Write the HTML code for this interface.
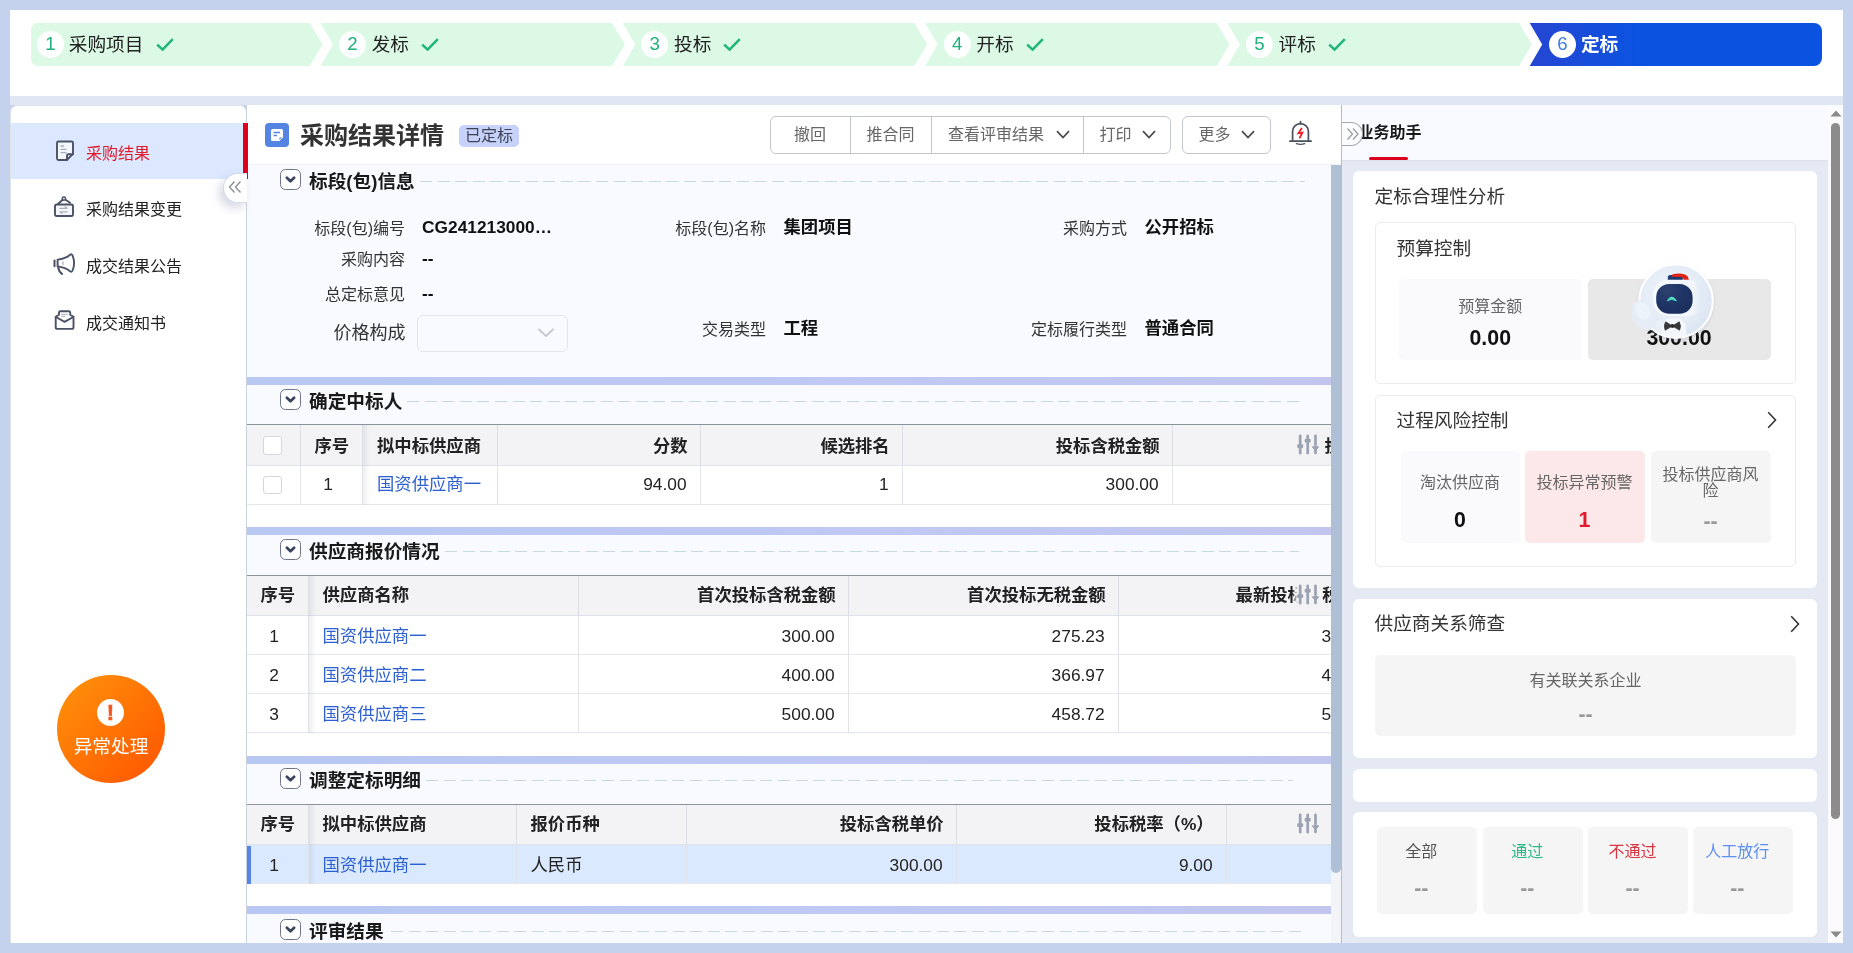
<!DOCTYPE html>
<html lang="zh-CN">
<head>
<meta charset="utf-8">
<title>采购结果详情</title>
<style>
*{box-sizing:border-box;margin:0;padding:0}
html,body{width:1853px;height:953px;overflow:hidden}
body{will-change:transform;background:#c4d2ee;font-family:"Liberation Sans","Noto Sans CJK SC",sans-serif;color:#222;position:relative;font-size:16px}
.abs{position:absolute}
.t{position:absolute;white-space:nowrap;line-height:1}
#top{position:absolute;left:10px;top:10px;width:1833px;height:86px;background:#fff}
#strip{position:absolute;left:10px;top:96px;width:1833px;height:9px;background:#e1e7f2}
.step{position:absolute;top:23px;height:43px;background:#dcf9e6}
.step .num{position:absolute;top:8px;width:27px;height:27px;border-radius:50%;background:#fff;color:#1fb27c;font-size:18.67px;text-align:center;line-height:26px}
.step .lbl{position:absolute;top:0;height:43px;line-height:43.5px;font-size:18.67px;color:#222;white-space:nowrap}
.step svg{position:absolute;top:14.5px}
#side{position:absolute;left:10px;top:105px;width:237px;height:838px;background:#fff;border:1px solid #dfe3ea;border-bottom:none;border-right-color:#cbd2de;border-radius:7px 7px 0 0}
.nav{position:absolute;left:0;width:235px;height:57px}
.nav .tx{position:absolute;left:75px;top:0;line-height:61px;font-size:16px;color:#222;white-space:nowrap}
.nav svg{position:absolute;left:42px}
#mainhead{position:absolute;left:247px;top:105px;width:1094px;height:60px;background:#fff;border-bottom:1px solid #f0f2f7}
#content{position:absolute;left:247px;top:165px;width:1084px;height:778px;background:#f9faff;overflow:hidden}
.band{position:absolute;left:0;width:1084px;height:7.5px;background:linear-gradient(90deg,#b8c8f2,#bfc9f3 55%,#c2c6ee)}
.tog{position:absolute;left:33px;width:21px;height:20.5px;border:1px solid #6e7486;border-radius:5.5px;background:#fff}
.tog svg{position:absolute;left:4px;top:6px}
.dash{position:absolute;height:1px;background:repeating-linear-gradient(90deg,#c9d9e1 0,#c9d9e1 12px,transparent 12px,transparent 17.6px)}
.lab{position:absolute;font-size:16px;color:#333;line-height:1;white-space:nowrap;text-align:right}
.val{position:absolute;font-size:17.33px;font-weight:bold;color:#111;line-height:1;white-space:nowrap}
.th{position:absolute;background:#f3f3f6;border-right:1px solid #dcdfe5;border-bottom:1px solid #dfe2e8;font-size:17.33px;font-weight:bold;color:#222;white-space:nowrap;overflow:hidden}
.td{position:absolute;background:#fff;border-right:1px solid #e1e3e8;border-bottom:1px solid #e6e8ec;font-size:17.33px;color:#222;white-space:nowrap;overflow:hidden}
.tbl{position:absolute;left:0;width:1084px;overflow:hidden;background:#fff}
.lnk{color:#2c60d0}
.cb{position:absolute;left:16px;width:18.5px;height:18.5px;border:1px solid #d3d7df;border-radius:3px;background:#fff}
.sicon{position:absolute}
#right{position:absolute;left:1341px;top:105px;width:487px;height:838px;background:#e5e9f4;overflow:hidden;border-left:1px solid #b3bccb}
.card{position:absolute;left:11px;width:464px;background:#fff;border-radius:6px}
.ibox{position:absolute;left:21.5px;width:421px;border:1px solid #ececf0;border-radius:5px;background:#fff}
.sc{position:absolute;border-radius:5px;text-align:center}
.sc .l{position:absolute;left:0;width:100%;font-size:16px;color:#666;line-height:1;white-space:nowrap}
.sc .v{position:absolute;left:0;width:100%;font-size:21.33px;font-weight:bold;color:#111;line-height:1}
.h2{position:absolute;font-size:18.67px;color:#333;line-height:1;white-space:nowrap}
</style>
</head>
<body>
<div id="top"></div>
<div id="strip"></div>
<div class="step" style="left:31.0px;width:291.6px;clip-path:polygon(0 0,278.7px 0,291.6px 21.5px,278.7px 43px,0 43px);border-radius:7px 0 0 7px;"><span class="num" style="left:6px">1</span><span class="lbl" style="left:37.8px">采购项目</span><svg width="18" height="13" viewBox="0 0 18 13" style="left:124.5px"><path d="M1.200 6.600 L6.600 11.600 L16.800 1.200" fill="none" stroke="#1fb47a" stroke-width="2.500"/></svg></div>
<div class="step" style="left:320.5px;width:304.4px;clip-path:polygon(0 0,291.5px 0,304.4px 21.5px,291.5px 43px,0 43px,12.5px 21.5px);"><span class="num" style="left:18.5px">2</span><span class="lbl" style="left:51.2px">发标</span><svg width="18" height="13" viewBox="0 0 18 13" style="left:100.5px"><path d="M1.200 6.600 L6.600 11.600 L16.800 1.200" fill="none" stroke="#1fb47a" stroke-width="2.500"/></svg></div>
<div class="step" style="left:622.8px;width:304.4px;clip-path:polygon(0 0,291.5px 0,304.4px 21.5px,291.5px 43px,0 43px,12.5px 21.5px);"><span class="num" style="left:18.5px">3</span><span class="lbl" style="left:51.2px">投标</span><svg width="18" height="13" viewBox="0 0 18 13" style="left:100.5px"><path d="M1.200 6.600 L6.600 11.600 L16.800 1.200" fill="none" stroke="#1fb47a" stroke-width="2.500"/></svg></div>
<div class="step" style="left:925.1px;width:304.4px;clip-path:polygon(0 0,291.5px 0,304.4px 21.5px,291.5px 43px,0 43px,12.5px 21.5px);"><span class="num" style="left:18.5px">4</span><span class="lbl" style="left:51.2px">开标</span><svg width="18" height="13" viewBox="0 0 18 13" style="left:100.5px"><path d="M1.200 6.600 L6.600 11.600 L16.800 1.200" fill="none" stroke="#1fb47a" stroke-width="2.500"/></svg></div>
<div class="step" style="left:1227.4px;width:304.4px;clip-path:polygon(0 0,291.5px 0,304.4px 21.5px,291.5px 43px,0 43px,12.5px 21.5px);"><span class="num" style="left:18.5px">5</span><span class="lbl" style="left:51.2px">评标</span><svg width="18" height="13" viewBox="0 0 18 13" style="left:100.5px"><path d="M1.200 6.600 L6.600 11.600 L16.800 1.200" fill="none" stroke="#1fb47a" stroke-width="2.500"/></svg></div>
<div class="step" style="left:1529.7px;width:292.3px;clip-path:polygon(0 0,100% 0,100% 100%,0 100%,12.5px 21.5px);border-radius:0 8px 8px 0;background:linear-gradient(90deg,#2646d2,#0a53e1 38%);"><span class="num" style="left:19.3px;color:#3f7de6">6</span><span class="lbl" style="left:51.2px;color:#fff;font-weight:bold">定标</span></div>
<div id="side">
<div class="nav" style="top:17px;background:#dbe8ff;width:233px;height:55.500px"></div>
<div class="t" style="left:75px;top:39.500px;font-size:16px;color:#e0192d">采购结果</div>
<div class="t" style="left:75px;top:95.700px;font-size:16px;color:#222">采购结果变更</div>
<div class="t" style="left:75px;top:152.800px;font-size:16px;color:#222">成交结果公告</div>
<div class="t" style="left:75px;top:210px;font-size:16px;color:#222">成交通知书</div>
<div class="abs" style="left:46px;top:569px;width:108px;height:108px;border-radius:50%;background:linear-gradient(135deg,#ff8e0a 10%,#ff5a00 90%)">
<div class="abs" style="left:40px;top:24px;width:27px;height:27px;border-radius:50%;background:#fff;color:#f5561a;font-weight:bold;font-size:22px;line-height:27.500px;text-align:center;-webkit-text-stroke:0.600px #f5561a">!</div>
<div class="t" style="left:0;width:108px;text-align:center;top:62.500px;font-size:18.670px;color:#fff">异常处理</div>
</div>
</div>
<svg class="abs" width="30" height="200" viewBox="50 136 30 200" style="left:50px;top:136px" fill="none" stroke="#4b5166" stroke-width="1.900" stroke-linejoin="round" stroke-linecap="round">
<path d="M58.500 141.500h13a1.500 1.500 0 0 1 1.500 1.500v10.800l-6.200 6.200h-8.300a1.500 1.500 0 0 1-1.500-1.500v-15.500a1.500 1.500 0 0 1 1.500-1.500z" fill="#f3f6fb"/>
<path d="M73 154.200h-4.700a1.300 1.300 0 0 0-1.300 1.300v4.500"/>
<path d="M61 146h2.600M61 149.300h5M61 152.600h5" stroke="#a9afbc" stroke-width="1.300"/>
<rect x="55" y="204.500" width="18" height="11.500" rx="1.800" fill="#f6f7fa"/>
<path d="M58 204 l4.600 -4.200 M65.500 199.800 l4.500 3"/>
<circle cx="63.900" cy="198.600" r="1.700" stroke-width="1.500"/>
<path d="M59.800 208.300h7.300l-2-1.500M67.200 211.800h-7.300l2 1.500" stroke="#a9afbc" stroke-width="1.200"/>
<path d="M54.500 260.500v5.800" stroke-width="2"/>
<path d="M57.600 259.600 q8 -0.800 12.500 -4.800 q1.500 -1.200 2.400 0.600 q1.600 3.600 1.600 7.600 q0 4 -1.600 7.600 q-0.900 1.800 -2.400 0.600 q-4.500 -3.800 -12.500 -4.800z"/>
<path d="M58.300 267.800 q0.600 3.800 3.600 6" stroke-width="2.200"/>
<path d="M62.900 262v2.400" stroke="#a9afbc" stroke-width="1.300"/>
<path d="M55.700 316.800 l3.300 -2 v-2.300 a1.300 1.300 0 0 1 1.300 -1.300 h8.600 a1.300 1.300 0 0 1 1.300 1.300 v2.300 l3.300 2 v10.400 a1.700 1.700 0 0 1 -1.700 1.700 h-14.400 a1.700 1.700 0 0 1 -1.700 -1.700z" fill="#fff"/>
<path d="M55.900 317 l8.700 4.800 l8.700 -4.800"/>
<path d="M61.500 314.300h6M61.500 316.300h3.500" stroke="#a9afbc" stroke-width="1.100"/>
</svg>
<div class="abs" style="left:222.500px;top:173px;width:24px;height:29.500px;border-radius:15px 0 0 15px;background:#fff;border:1px solid #d3dbea;border-right:none;box-shadow:-4px 5px 10px rgba(110,120,160,.28);z-index:6"><svg width="14" height="14" viewBox="0 0 14 14" style="position:absolute;left:4.500px;top:6px"><path d="M6.500 1.500 L1.500 7 L6.500 12.500 M12.500 1.500 L7.500 7 L12.500 12.500" fill="none" stroke="#8a8f99" stroke-width="1.400"/></svg></div>
<div class="abs" style="left:243.300px;top:123px;width:4.500px;height:55.500px;background:#e0001b;z-index:5"></div>
<div id="mainhead">
<div class="abs" style="left:17.500px;top:18px;width:24px;height:24px;border-radius:4px;background:#5585e3"><svg width="24" height="24" viewBox="0 0 24 24"><path d="M7.500 6h9a1.500 1.500 0 0 1 1.500 1.500v6.500l-4 4h-6.500a1.500 1.500 0 0 1-1.500-1.500v-9a1.500 1.500 0 0 1 1.500-1.500z" fill="#fff"/><path d="M18 14h-3a1 1 0 0 0-1 1v3z" fill="#5585e3" stroke="#fff" stroke-width="1"/><path d="M8.500 9.500h6.500M8.500 12.500h3.500" stroke="#5585e3" stroke-width="1.500"/></svg></div>
<div class="t" style="left:53px;top:18.500px;font-size:24px;font-weight:bold;color:#333">采购结果详情</div>
<div class="abs" style="left:212px;top:20px;width:60px;height:22px;border-radius:5px;background:#c6d2fa;color:#3d4354;font-size:16px;line-height:22px;text-align:center">已定标</div>
<div class="abs" style="left:522.500px;top:11px;width:401.500px;height:38px;border:1px solid #c3c6cc;border-radius:6px;background:#fff;color:#666;font-size:16px;line-height:36px">
<span class="abs" style="left:0;width:80px;text-align:center;border-right:1px solid #c3c6cc;height:36px">撤回</span>
<span class="abs" style="left:80px;width:81px;text-align:center;border-right:1px solid #c3c6cc;height:36px">推合同</span>
<span class="abs" style="left:161px;width:152px;border-right:1px solid #c3c6cc;height:36px;padding-left:16.500px">查看评审结果<svg width="14" height="9" viewBox="0 0 14 9" style="position:absolute;left:124px;top:12.500px"><path d="M1 1.200 L7 7.500 L13 1.200" fill="none" stroke="#4a4a4a" stroke-width="1.700"/></svg></span>
<span class="abs" style="left:313px;width:87px;height:36px;padding-left:16px">打印<svg width="14" height="9" viewBox="0 0 14 9" style="position:absolute;left:58px;top:12.500px"><path d="M1 1.200 L7 7.500 L13 1.200" fill="none" stroke="#4a4a4a" stroke-width="1.700"/></svg></span>
</div>
<div class="abs" style="left:934.500px;top:11px;width:89.500px;;height:38px;border:1px solid #c3c6cc;border-radius:6px;background:#fff;color:#666;font-size:16px;line-height:36px;padding-left:16px">更多<svg width="14" height="9" viewBox="0 0 14 9" style="position:absolute;left:58px;top:12.500px"><path d="M1 1.200 L7 7.500 L13 1.200" fill="none" stroke="#4a4a4a" stroke-width="1.700"/></svg></div>
<svg width="40" height="40" viewBox="1280 115 40 40" style="position:absolute;left:1033px;top:10px" fill="none" stroke="#4a4f5c" stroke-width="1.700" stroke-linecap="round"><path d="M1292.600 141.200V131.500a7.900 7.900 0 0 1 15.800 0V141.200"/><path d="M1289.900 141.200H1311.100M1300.500 121.700V123.600"/><path d="M1296.500 143.700q4.100 1.300 8.200 0" stroke-width="1.400"/><path d="M1301.600 128.600L1298.400 133.300L1302.400 132.700L1299.800 137.600" stroke="#ee1c25" stroke-width="1.800" stroke-linejoin="miter"/></svg>
</div><div id="content"><div class="tog" style="top:4.3px"><svg width="11" height="8" viewBox="0 0 11 8"><path d="M1.900 1.700 L5.500 5.200 L9.100 1.700" fill="none" stroke="#3b4560" stroke-width="2.700" stroke-linecap="round" stroke-linejoin="round"/></svg></div><div class="dash" style="left:172.5px;top:15.899999999999999px;width:885.5px"></div><div class="t" style="left:62px;top:8.0px;font-size:18.670px;font-weight:bold;color:#1a1a1a">标段(包)信息</div><div class="lab" style="right:926px;top:56.3px;font-size:16px">标段(包)编号</div><div class="val" style="left:175px;top:54.1px">CG241213000…</div><div class="lab" style="right:565px;top:56.3px;font-size:16px">标段(包)名称</div><div class="val" style="left:536.5px;top:54.1px">集团项目</div><div class="lab" style="right:204px;top:56.3px;font-size:16px">采购方式</div><div class="val" style="left:897.5px;top:54.1px">公开招标</div><div class="lab" style="right:926px;top:86.8px;font-size:16px">采购内容</div><div class="val" style="left:175px;top:84.6px">--</div><div class="lab" style="right:926px;top:121.8px;font-size:16px">总定标意见</div><div class="val" style="left:175px;top:119.6px">--</div><div class="lab" style="right:925.5px;top:159.3px;font-size:18px">价格构成</div><div class="abs" style="left:169.500px;top:150px;width:151px;height:36.500px;border:1px solid #e4e6ec;border-radius:6px;background:#f9faff"><svg width="18" height="10" viewBox="0 0 18 10" style="position:absolute;left:119.500px;top:12px"><path d="M1.500 1 L9 8 L16.500 1" fill="none" stroke="#c3c7cf" stroke-width="1.800"/></svg></div><div class="lab" style="right:565px;top:156.8px;font-size:16px">交易类型</div><div class="val" style="left:536.5px;top:154.6px">工程</div><div class="lab" style="right:204px;top:156.8px;font-size:16px">定标履行类型</div><div class="val" style="left:897.5px;top:154.6px">普通合同</div><div class="band" style="top:212px"></div><div class="tog" style="top:224.2px"><svg width="11" height="8" viewBox="0 0 11 8"><path d="M1.900 1.700 L5.500 5.200 L9.100 1.700" fill="none" stroke="#3b4560" stroke-width="2.700" stroke-linecap="round" stroke-linejoin="round"/></svg></div><div class="dash" style="left:160px;top:235.79999999999998px;width:898px"></div><div class="t" style="left:62px;top:227.89999999999998px;font-size:18.670px;font-weight:bold;color:#1a1a1a">确定中标人</div><div class="tbl" style="top:259px;height:80.5px;border-top:1px solid #8e9299"><div class="th" style="left:0px;top:0;width:53.5px;height:40.5px;line-height:42.1px;text-align:center;padding-left:1px;"><span class="cb" style="top:11px"></span></div><div class="th" style="left:53.5px;top:0;width:62.5px;height:40.5px;line-height:42.1px;text-align:center;padding-left:1px;">序号</div><div class="th" style="left:116px;top:0;width:134.5px;height:40.5px;line-height:42.1px;text-align:left;padding-left:14px;">拟中标供应商</div><div class="th" style="left:250.5px;top:0;width:203.0px;height:40.5px;line-height:42.1px;text-align:right;padding-right:11.800px;">分数</div><div class="th" style="left:453.5px;top:0;width:202.0px;height:40.5px;line-height:42.1px;text-align:right;padding-right:11.800px;">候选排名</div><div class="th" style="left:655.5px;top:0;width:270.0px;height:40.5px;line-height:42.1px;text-align:right;padding-right:11.800px;">投标含税金额</div><div class="th" style="left:925.5px;top:0;width:287.5px;height:40.5px;line-height:42.1px;text-align:right;padding-right:11.800px;"><span style="position:relative;left:-1.500px">投标不含税金额</span></div><div class="td" style="left:0px;top:40.5px;width:53.5px;height:39px;line-height:36.4px;text-align:center;padding-right:6.500px;"><span class="cb" style="top:10px"></span></div><div class="td" style="left:53.5px;top:40.5px;width:62.5px;height:39px;line-height:36.4px;text-align:center;padding-right:6.500px;">1</div><div class="td" style="left:116px;top:40.5px;width:134.5px;height:39px;line-height:36.4px;text-align:left;padding-left:14px;"><span class="lnk">国资供应商一</span></div><div class="td" style="left:250.5px;top:40.5px;width:203.0px;height:39px;line-height:36.4px;text-align:right;padding-right:12.900px;">94.00</div><div class="td" style="left:453.5px;top:40.5px;width:202.0px;height:39px;line-height:36.4px;text-align:right;padding-right:12.900px;">1</div><div class="td" style="left:655.5px;top:40.5px;width:270.0px;height:39px;line-height:36.4px;text-align:right;padding-right:12.900px;">300.00</div><div class="td" style="left:925.5px;top:40.5px;width:287.5px;height:39px;line-height:36.4px;text-align:right;padding-right:12.900px;">275.23</div><div class="abs" style="left:116px;top:0;width:7px;height:79.5px;background:linear-gradient(90deg,rgba(60,70,90,.09),rgba(60,70,90,0))"></div><svg class="sicon" width="22" height="21" viewBox="0 0 22 21" style="left:1050px;top:9px"><g stroke="#9ba2b0" stroke-width="2.700" stroke-linecap="round" fill="none"><path d="M3.200 1.800v17.400M10.700 1.800v17.400M18.500 1.800v9.500M18.500 14.500v4.500"/></g><g fill="#9ba2b0"><rect x="0.200" y="10.200" width="6" height="3.800" rx="1.200"/><rect x="7.700" y="4.800" width="6" height="3.800" rx="1.200"/><path d="M15.300 12.800h6.400l-3.200 4z" stroke="#9ba2b0" stroke-width="1" stroke-linejoin="round"/></g></svg></div><div class="abs" style="left:0;top:340px;width:1084px;height:23px;background:#fff"></div><div class="band" style="top:362px"></div><div class="tog" style="top:374.3px"><svg width="11" height="8" viewBox="0 0 11 8"><path d="M1.900 1.700 L5.500 5.200 L9.100 1.700" fill="none" stroke="#3b4560" stroke-width="2.700" stroke-linecap="round" stroke-linejoin="round"/></svg></div><div class="dash" style="left:198px;top:385.90000000000003px;width:854px"></div><div class="t" style="left:62px;top:378.0px;font-size:18.670px;font-weight:bold;color:#1a1a1a">供应商报价情况</div><div class="tbl" style="top:410px;height:158.39999999999998px;border-top:1px solid #8e9299"><div class="th" style="left:0px;top:0;width:61.5px;height:39.5px;line-height:39.1px;text-align:center;padding-left:1px;">序号</div><div class="th" style="left:61.5px;top:0;width:270.0px;height:39.5px;line-height:39.1px;text-align:left;padding-left:14px;">供应商名称</div><div class="th" style="left:331.5px;top:0;width:270.0px;height:39.5px;line-height:39.1px;text-align:right;padding-right:11.800px;">首次投标含税金额</div><div class="th" style="left:601.5px;top:0;width:270.0px;height:39.5px;line-height:39.1px;text-align:right;padding-right:11.800px;">首次投标无税金额</div><div class="th" style="left:871.5px;top:0;width:270.0px;height:39.5px;line-height:39.1px;text-align:right;padding-right:11.800px;"><span style="position:relative;left:-1.500px">最新投标含税金额</span></div><div class="td" style="left:0px;top:39.5px;width:61.5px;height:39.3px;line-height:40.699999999999996px;text-align:center;padding-right:6.500px;">1</div><div class="td" style="left:61.5px;top:39.5px;width:270.0px;height:39.3px;line-height:40.699999999999996px;text-align:left;padding-left:14px;"><span class="lnk">国资供应商一</span></div><div class="td" style="left:331.5px;top:39.5px;width:270.0px;height:39.3px;line-height:40.699999999999996px;text-align:right;padding-right:12.900px;">300.00</div><div class="td" style="left:601.5px;top:39.5px;width:270.0px;height:39.3px;line-height:40.699999999999996px;text-align:right;padding-right:12.900px;">275.23</div><div class="td" style="left:871.5px;top:39.5px;width:270.0px;height:39.3px;line-height:40.699999999999996px;text-align:right;padding-right:12.900px;">300.00</div><div class="td" style="left:0px;top:78.8px;width:61.5px;height:39.3px;line-height:40.699999999999996px;text-align:center;padding-right:6.500px;">2</div><div class="td" style="left:61.5px;top:78.8px;width:270.0px;height:39.3px;line-height:40.699999999999996px;text-align:left;padding-left:14px;"><span class="lnk">国资供应商二</span></div><div class="td" style="left:331.5px;top:78.8px;width:270.0px;height:39.3px;line-height:40.699999999999996px;text-align:right;padding-right:12.900px;">400.00</div><div class="td" style="left:601.5px;top:78.8px;width:270.0px;height:39.3px;line-height:40.699999999999996px;text-align:right;padding-right:12.900px;">366.97</div><div class="td" style="left:871.5px;top:78.8px;width:270.0px;height:39.3px;line-height:40.699999999999996px;text-align:right;padding-right:12.900px;">400.00</div><div class="td" style="left:0px;top:118.1px;width:61.5px;height:39.3px;line-height:40.699999999999996px;text-align:center;padding-right:6.500px;">3</div><div class="td" style="left:61.5px;top:118.1px;width:270.0px;height:39.3px;line-height:40.699999999999996px;text-align:left;padding-left:14px;"><span class="lnk">国资供应商三</span></div><div class="td" style="left:331.5px;top:118.1px;width:270.0px;height:39.3px;line-height:40.699999999999996px;text-align:right;padding-right:12.900px;">500.00</div><div class="td" style="left:601.5px;top:118.1px;width:270.0px;height:39.3px;line-height:40.699999999999996px;text-align:right;padding-right:12.900px;">458.72</div><div class="td" style="left:871.5px;top:118.1px;width:270.0px;height:39.3px;line-height:40.699999999999996px;text-align:right;padding-right:12.900px;">500.00</div><div class="abs" style="left:61.5px;top:0;width:7px;height:157.39999999999998px;background:linear-gradient(90deg,rgba(60,70,90,.09),rgba(60,70,90,0))"></div><div class="abs" style="left:1045px;top:0;width:30px;height:39px;background:linear-gradient(90deg,rgba(243,243,246,0),#f3f3f6 6px)"></div><svg class="sicon" width="22" height="21" viewBox="0 0 22 21" style="left:1050px;top:7.5px"><g stroke="#9ba2b0" stroke-width="2.700" stroke-linecap="round" fill="none"><path d="M3.200 1.800v17.400M10.700 1.800v17.400M18.500 1.800v9.500M18.500 14.500v4.500"/></g><g fill="#9ba2b0"><rect x="0.200" y="10.200" width="6" height="3.800" rx="1.200"/><rect x="7.700" y="4.800" width="6" height="3.800" rx="1.200"/><path d="M15.300 12.800h6.400l-3.200 4z" stroke="#9ba2b0" stroke-width="1" stroke-linejoin="round"/></g></svg></div><div class="abs" style="left:0;top:569px;width:1084px;height:23px;background:#fff"></div><div class="band" style="top:591px"></div><div class="tog" style="top:603.2px"><svg width="11" height="8" viewBox="0 0 11 8"><path d="M1.900 1.700 L5.500 5.200 L9.100 1.700" fill="none" stroke="#3b4560" stroke-width="2.700" stroke-linecap="round" stroke-linejoin="round"/></svg></div><div class="dash" style="left:179px;top:614.8000000000001px;width:867px"></div><div class="t" style="left:62px;top:606.9000000000001px;font-size:18.670px;font-weight:bold;color:#1a1a1a">调整定标明细</div><div class="tbl" style="top:638.5px;height:80.6px;border-top:1px solid #8e9299"><div class="th" style="left:0px;top:0;width:61.5px;height:40.7px;line-height:38.300000000000004px;text-align:center;padding-left:1px;">序号</div><div class="th" style="left:61.5px;top:0;width:208.0px;height:40.7px;line-height:38.300000000000004px;text-align:left;padding-left:14px;">拟中标供应商</div><div class="th" style="left:269.5px;top:0;width:170.0px;height:40.7px;line-height:38.300000000000004px;text-align:left;padding-left:14px;">报价币种</div><div class="th" style="left:439.5px;top:0;width:270.0px;height:40.7px;line-height:38.300000000000004px;text-align:right;padding-right:11.800px;">投标含税单价</div><div class="th" style="left:709.5px;top:0;width:270.0px;height:40.7px;line-height:38.300000000000004px;text-align:right;padding-right:11.800px;">投标税率（%）</div><div class="th" style="left:979.5px;top:0;width:110.5px;height:40.7px;line-height:38.300000000000004px;text-align:left;padding-left:14px;"></div><div class="td" style="left:0px;top:40.7px;width:61.5px;height:38.9px;line-height:40.3px;text-align:center;padding-right:6.500px;background:#dbe9ff;">1</div><div class="td" style="left:61.5px;top:40.7px;width:208.0px;height:38.9px;line-height:40.3px;text-align:left;padding-left:14px;background:#dbe9ff;"><span class="lnk">国资供应商一</span></div><div class="td" style="left:269.5px;top:40.7px;width:170.0px;height:38.9px;line-height:40.3px;text-align:left;padding-left:14px;background:#dbe9ff;">人民币</div><div class="td" style="left:439.5px;top:40.7px;width:270.0px;height:38.9px;line-height:40.3px;text-align:right;padding-right:12.900px;background:#dbe9ff;">300.00</div><div class="td" style="left:709.5px;top:40.7px;width:270.0px;height:38.9px;line-height:40.3px;text-align:right;padding-right:12.900px;background:#dbe9ff;">9.00</div><div class="td" style="left:979.5px;top:40.7px;width:110.5px;height:38.9px;line-height:40.3px;text-align:left;padding-left:14px;background:#dbe9ff;"></div><div class="abs" style="left:61.5px;top:0;width:7px;height:79.6px;background:linear-gradient(90deg,rgba(60,70,90,.09),rgba(60,70,90,0))"></div><svg class="sicon" width="22" height="21" viewBox="0 0 22 21" style="left:1050px;top:8px"><g stroke="#9ba2b0" stroke-width="2.700" stroke-linecap="round" fill="none"><path d="M3.200 1.800v17.400M10.700 1.800v17.400M18.500 1.800v9.500M18.500 14.500v4.500"/></g><g fill="#9ba2b0"><rect x="0.200" y="10.200" width="6" height="3.800" rx="1.200"/><rect x="7.700" y="4.800" width="6" height="3.800" rx="1.200"/><path d="M15.300 12.800h6.400l-3.200 4z" stroke="#9ba2b0" stroke-width="1" stroke-linejoin="round"/></g></svg><div class="abs" style="left:0;top:41px;width:3.500px;height:38px;background:#5585e8"></div></div><div class="abs" style="left:0;top:719px;width:1084px;height:23px;background:#fff"></div><div class="band" style="top:741px"></div><div class="tog" style="top:754px"><svg width="11" height="8" viewBox="0 0 11 8"><path d="M1.900 1.700 L5.500 5.200 L9.100 1.700" fill="none" stroke="#3b4560" stroke-width="2.700" stroke-linecap="round" stroke-linejoin="round"/></svg></div><div class="dash" style="left:144px;top:765.6px;width:914px"></div><div class="t" style="left:62px;top:757.7px;font-size:18.670px;font-weight:bold;color:#1a1a1a">评审结果</div></div><div class="abs" style="left:1331px;top:165px;width:10px;height:778px;background:#f3f4f8"></div><div class="abs" style="left:1331px;top:165px;width:10px;height:708px;background:#aebfd6;border-radius:0 0 5px 5px"></div><div id="right">
<div class="abs" style="left:0;top:0;width:488px;height:56px;background:#f9faff;border-bottom:1px solid #dde1ea"></div>
<div class="t" style="left:15.500px;top:19.500px;font-size:16px;font-weight:bold;color:#1a1a1a">业务助手</div>
<div class="abs" style="left:27px;top:51.500px;width:39px;height:3px;background:#d9001b;border-radius:1.500px"></div>
<div class="abs" style="left:0;top:17px;width:21px;height:24px;border:1px solid #a3a7b0;border-left:none;border-radius:0 12px 12px 0;background:#fbfcfe"><svg width="14" height="14" viewBox="0 0 14 14" style="position:absolute;left:4px;top:4px"><path d="M1.500 1.500 L6.500 7 L1.500 12.500 M7 1.500 L12 7 L7 12.500" fill="none" stroke="#9a9da3" stroke-width="1.300"/></svg></div>
<div class="card" style="top:66px;height:416.500px">
 <div class="h2" style="left:21.500px;top:17px">定标合理性分析</div>
 <div class="ibox" style="top:51px;height:161.500px">
  <div class="h2" style="left:21px;top:16.500px">预算控制</div>
  <div class="sc" style="left:23.500px;top:55.500px;width:182.500px;height:81.500px;background:#fafafc"><div class="l" style="top:20.300px">预算金额</div><div class="v" style="top:49.200px">0.00</div></div>
  <div class="sc" style="left:212px;top:55.500px;width:183px;height:81.500px;background:#e8e8e8"><div class="v" style="top:49.200px">300.00</div></div>
 </div>
 <div class="ibox" style="top:224px;height:171.700px">
  <div class="h2" style="left:21px;top:15.500px">过程风险控制</div><svg width="10" height="18" viewBox="0 0 10 18" style="position:absolute;left:391px;top:15px"><path d="M1.200 1.200 L8.500 9 L1.200 16.800" fill="none" stroke="#333" stroke-width="1.600"/></svg>
  <div class="sc" style="left:25px;top:54.500px;width:119px;height:92px;background:#fafafc"><div class="l" style="top:24.600px">淘汰供应商</div><div class="v" style="top:59px">0</div></div>
  <div class="sc" style="left:149px;top:54.500px;width:120px;height:92px;background:#fde8e9"><div class="l" style="top:24.600px">投标异常预警</div><div class="v" style="top:59px;color:#e0192d">1</div></div>
  <div class="sc" style="left:275px;top:54.500px;width:120px;height:92px;background:#f5f5f5"><div class="l" style="top:16.600px;white-space:normal;line-height:15.500px;padding:0 11px">投标供应商风险</div><div class="v" style="top:60px;color:#999">--</div></div>
 </div>
</div>
<div class="card" style="top:494px;height:158.500px">
 <div class="h2" style="left:21.500px;top:16px">供应商关系筛查</div><svg width="10" height="18" viewBox="0 0 10 18" style="position:absolute;left:437px;top:16px"><path d="M1.200 1.200 L8.500 9 L1.200 16.800" fill="none" stroke="#333" stroke-width="1.600"/></svg>
 <div class="sc" style="left:22px;top:55.500px;width:421px;height:81px;background:#f5f5f5"><div class="l" style="top:18.500px">有关联关系企业</div><div class="v" style="top:49px;color:#999">--</div></div>
</div>
<div class="card" style="top:664px;height:33px"></div>
<div class="card" style="top:706.500px;height:125px"><div class="sc" style="left:24px;top:15px;width:99.5px;height:87px;background:#f5f5f5"><div class="l" style="top:17.300px;left:-5.500px;color:#555">全部</div><div class="v" style="top:51px;left:-5.500px;color:#999">--</div></div><div class="sc" style="left:130px;top:15px;width:99.5px;height:87px;background:#f5f5f5"><div class="l" style="top:17.300px;left:-5.500px;color:#2bb98a">通过</div><div class="v" style="top:51px;left:-5.500px;color:#999">--</div></div><div class="sc" style="left:234.7px;top:15px;width:100.8px;height:87px;background:#f5f5f5"><div class="l" style="top:17.300px;left:-5.500px;color:#d93644">不通过</div><div class="v" style="top:51px;left:-5.500px;color:#999">--</div></div><div class="sc" style="left:340px;top:15px;width:99.5px;height:87px;background:#f5f5f5"><div class="l" style="top:17.300px;left:-5.500px;color:#5c8fee">人工放行</div><div class="v" style="top:51px;left:-5.500px;color:#999">--</div></div>
</div>
</div>
<svg class="abs" width="110" height="100" viewBox="1620 255 110 100" style="left:1620px;top:255px">
<defs>
<radialGradient id="rg1" cx="0.45" cy="0.4" r="0.62"><stop offset="0" stop-color="#f1f6fc"/><stop offset="0.7" stop-color="#e3ebf6"/><stop offset="1" stop-color="#d9e3f0"/></radialGradient>
<radialGradient id="rg2" cx="0.3" cy="0.2" r="0.9"><stop offset="0" stop-color="#2e426f"/><stop offset="0.5" stop-color="#1f3566"/><stop offset="1" stop-color="#1b2e5c"/></radialGradient>
<linearGradient id="rg3" x1="0" y1="0" x2="1" y2="0"><stop offset="0" stop-color="#f7fafd"/><stop offset="0.78" stop-color="#f2f6fb"/><stop offset="1" stop-color="#dde6f2"/></linearGradient>
<clipPath id="rc"><circle cx="1676" cy="301" r="36.300"/></clipPath>
<filter id="rsh" x="-20%" y="-20%" width="140%" height="140%"><feGaussianBlur stdDeviation="1.600"/></filter>
</defs>
<circle cx="1676" cy="302.500" r="37.800" fill="#7f8ca6" opacity="0.300" filter="url(#rsh)"/>
<circle cx="1676" cy="301" r="36.800" fill="url(#rg1)" stroke="#fff" stroke-width="2.200"/>
<ellipse cx="1644" cy="315" rx="11.500" ry="15.500" fill="#e6edf7" transform="rotate(-28 1644 315)"/>
<ellipse cx="1642.500" cy="311" rx="7" ry="9" fill="#edf3fa" transform="rotate(-28 1642.500 311)"/>
<g clip-path="url(#rc)">
<path d="M1662 324 q4 -6 12 -6 q8 0 11.500 6 l2 18 h-27z" fill="#f4f8fc"/>
<path d="M1656 322 q3 -3 7 -2 l-3 20 h-8z" fill="#e9f0f8"/>
<rect x="1667.800" y="275" width="15" height="7" rx="2.600" fill="#1d3a70"/>
<path d="M1672.500 274.300 q7 -1.800 13 0.400 q3 1.600 3.300 5.300 l-4.800 0.600 q-0.500 -3 -3 -3.500 l-9.500 -0.300z" fill="#e02418"/>
<rect x="1653.300" y="279.800" width="50.200" height="36.200" rx="15" fill="url(#rg3)"/>
<rect x="1656.200" y="284" width="36.400" height="29.800" rx="13" fill="url(#rg2)"/>
<path d="M1667.200 300.800 q4.600 -7.400 9.200 0 q-4.600 -3 -9.200 0z" fill="#4ee6cb" stroke="#4ee6cb" stroke-width="0.900" stroke-linejoin="round"/>
<path d="M1672.400 326 l-6.800 -4.200 q-2.300 4.200 -0.400 8.400z M1672.400 326 l6.800 -4.200 q2.300 4.200 0.400 8.400z" fill="#38383a" stroke="#38383a" stroke-width="0.800" stroke-linejoin="round"/>
<circle cx="1672.400" cy="326" r="1.900" fill="#2a2a2c"/>
</g>
</svg>
<div class="abs" style="left:1828px;top:105px;width:15px;height:838px;background:#fbfbfd"></div>
<div class="abs" style="left:1831px;top:123px;width:9px;height:696px;border-radius:4.500px;background:#8c8c8c"></div>
<svg class="abs" width="12" height="7" viewBox="0 0 12 7" style="left:1829.500px;top:110px"><path d="M0.500 6.500 L6 0.500 L11.500 6.500z" fill="#8a8a8a"/></svg>
<svg class="abs" width="12" height="7" viewBox="0 0 12 7" style="left:1829.500px;top:931px"><path d="M0.500 0.500 L6 6.500 L11.500 0.500z" fill="#8a8a8a"/></svg>
</body>
</html>
